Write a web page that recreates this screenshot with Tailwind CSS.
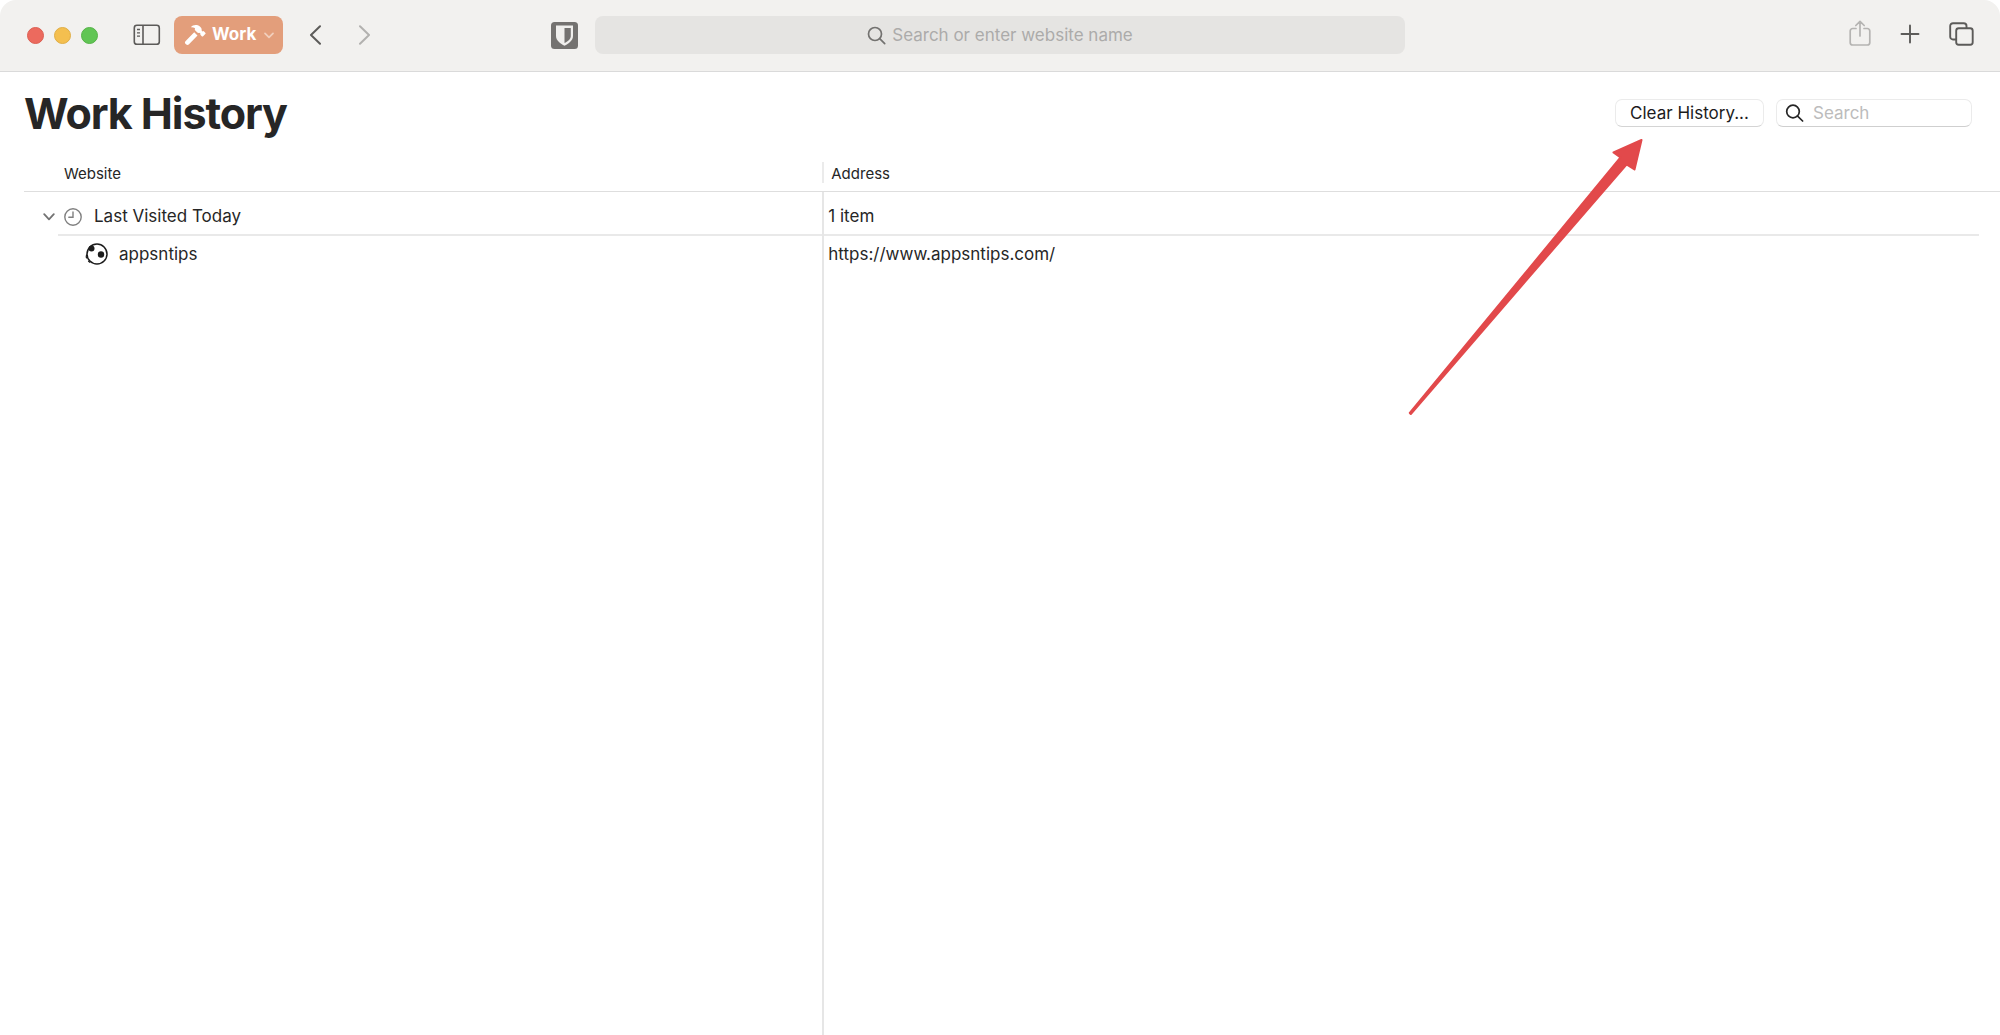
<!DOCTYPE html>
<html lang="en">
<head>
<meta charset="utf-8">
<meta name="viewport" content="width=device-width, initial-scale=1">
<title>Work History</title>
<script src="https://cdn.jsdelivr.net/npm/@tailwindcss/browser@4"></script>
</head>
<body class="relative flex min-h-screen flex-col bg-white font-['Inter',sans-serif] text-[#262626]">

<header class="grid h-[72px] grid-cols-[1fr_40.5%_1fr] items-start rounded-t-[16px] border-b border-[#dadada] bg-[#f2f1ef] pt-4">
  <div class="flex h-[38px] items-center pr-[17px] pl-[27px]">
    <div class="flex gap-[10px]">
      <button aria-label="Close" class="size-[17px] rounded-full border border-[#dc5f52] bg-[#ec6a5e]"></button>
      <button aria-label="Minimize" class="size-[17px] rounded-full border border-[#e0ae45] bg-[#f4bf4f]"></button>
      <button aria-label="Zoom" class="size-[17px] rounded-full border border-[#55b347] bg-[#61c554]"></button>
    </div>
    <button aria-label="Show sidebar" class="ml-[35px]">
      <svg class="block" width="28" height="22" viewBox="0 0 28 22" fill="none" stroke="#5c5b59" stroke-width="1.6"><rect x="1.3" y="1.3" width="25" height="19" rx="2.6"/><path d="M10 1.3v19"/><path d="M4 5.5h3M4 8.8h3M4 12.1h3" stroke-width="1.3"/></svg>
    </button>
    <button class="ml-[13px] flex h-[38px] w-[109px] items-center rounded-[8px] bg-[#e39e7b] pl-[10px] text-[17px] font-bold text-white">
      <svg class="mr-[6px] shrink-0" width="22" height="22" viewBox="0 0 22 22" fill="#fff"><path d="M6.800 3.200C9 .7 13 .3 15.900 2.600C17.400 3.800 17.800 5 17.700 6.700L18.700 7.600L19.600 7L21.500 8.900C21.700 9.200 21.700 9.500 21.500 9.800L18.900 12.400C18.600 12.600 18.300 12.600 18 12.400L16.300 10.700L16.500 9.700L15.500 8.800C14.700 9.100 14 9 13.300 8.500L11.300 6.600C10.600 5.800 10.700 4.900 11.100 4.300C9.900 3.400 8.400 3.200 6.800 3.200Z"/><path d="M10.200 8.300L13.500 11.500L5 20.300C4.100 21.200 2.900 21.200 2 20.300L1.500 19.800C.7 19 .7 17.800 1.700 16.900Z"/></svg>
      Work
      <svg class="ml-2 shrink-0" width="10" height="7" viewBox="0 0 10 7" fill="none" stroke="#f2cfbd" stroke-width="1.700" stroke-linecap="round" stroke-linejoin="round"><path d="M1 1.300l4 4 4-4"/></svg>
    </button>
    <button aria-label="Back" class="ml-[26px]">
      <svg class="block" width="13" height="20" viewBox="0 0 13 20" fill="none" stroke="#5c5b59" stroke-width="2" stroke-linecap="round" stroke-linejoin="round"><path d="M11 1.300L2 10l9 8.700"/></svg>
    </button>
    <button aria-label="Forward" class="ml-9">
      <svg class="block" width="13" height="20" viewBox="0 0 13 20" fill="none" stroke="#b2b1af" stroke-width="2" stroke-linecap="round" stroke-linejoin="round"><path d="M2 1.300L11 10l-9 8.700"/></svg>
    </button>
    <button aria-label="Password manager" class="ml-auto">
      <svg class="block" width="27" height="27" viewBox="0 0 27 27"><rect width="27" height="27" rx="3.500" fill="#747270"/><path d="M5 3.500h17v10.500c0 4.500-4.500 7.900-8.500 9.700C9.500 21.900 5 18.500 5 14z" fill="#f0efed"/><path d="M13.500 6h6.300v8c0 3.200-3.300 5.500-6.300 7.100z" fill="#747270"/></svg>
    </button>
  </div>

  <label class="flex h-[38px] items-center justify-center gap-[6px] rounded-[8px] bg-[#e5e4e2]">
    <svg width="19" height="19" viewBox="0 0 19 19" fill="none" stroke="#737270" stroke-width="1.700" stroke-linecap="round"><circle cx="8" cy="8" r="6.500"/><path d="M12.700 12.700l5 5"/></svg>
    <input type="text" aria-label="Address" placeholder="Search or enter website name" class="field-sizing-content pt-[2px] text-[17px] outline-none placeholder:text-[#acabaa]">
  </label>

  <div class="flex h-[38px] items-center justify-end pr-[26px]">
    <button aria-label="Share">
      <svg class="mb-1 block" width="22" height="26" viewBox="0 0 22 26" fill="none" stroke="#b5b4b2" stroke-width="1.700" stroke-linecap="round" stroke-linejoin="round"><path d="M7 8.500H3.700A2.500 2.500 0 0 0 1.200 11v11.500A2.500 2.500 0 0 0 3.700 25h14.600a2.500 2.500 0 0 0 2.500-2.500V11a2.500 2.500 0 0 0-2.500-2.500H15M11 16V1.500M6.800 5.500L11 1.300l4.200 4.200"/></svg>
    </button>
    <button aria-label="New tab" class="ml-[29px]">
      <svg class="mb-[2px] block" width="20" height="20" viewBox="0 0 20 20" fill="none" stroke="#5c5b59" stroke-width="1.900" stroke-linecap="round"><path d="M10 1.500v17M1.500 10h17"/></svg>
    </button>
    <button aria-label="Tab overview" class="ml-[29px]">
      <svg class="mb-[2px] block" width="25" height="24" viewBox="0 0 25 24" fill="none" stroke="#5c5b59" stroke-width="1.900" stroke-linejoin="round"><rect x="7.200" y="6.200" width="16.500" height="16.500" rx="2.500"/><path d="M7 17.500H4A2.800 2.800 0 0 1 1.200 14.700V4A2.800 2.800 0 0 1 4 1.200h10.700A2.800 2.800 0 0 1 17.500 4v2.200"/></svg>
    </button>
  </div>
</header>

<main class="flex flex-1 flex-col pl-6">
  <div class="flex h-[90px] items-center pr-7 pb-2">
    <h1 class="mr-auto text-[43px] leading-[52px] font-bold tracking-tight">Work History</h1>
    <button class="h-[28px] w-[149px] rounded-[7px] border border-[#ebebeb] border-b-[#d4d4d4] text-[17px] leading-[22px] text-[#1c1c1c]">Clear History...</button>
    <label class="ml-3 flex h-[28px] w-[196px] items-center gap-[9px] rounded-[7px] border border-[#ebebeb] border-b-[#cfcfcf] pl-2">
      <svg class="shrink-0" width="19" height="18" viewBox="0 0 19 18" fill="none" stroke="#262626" stroke-width="1.700" stroke-linecap="round"><circle cx="8" cy="7.500" r="6.300"/><path d="M12.600 12.100l5 4.900"/></svg>
      <input type="search" aria-label="Search history" placeholder="Search" class="w-full min-w-0 pt-[2px] text-[17px] outline-none placeholder:text-[#bcbcbc]">
    </label>
  </div>

  <table class="w-full flex-1 table-fixed border-separate border-spacing-0 text-left text-[17px]">
    <colgroup><col class="w-[40.5%]"><col></colgroup>
    <thead class="text-[15px]">
      <tr class="h-[30px]">
        <th class="border-b border-[#dedede] p-0 pb-[8px] font-normal"><div class="h-[21px] border-r-2 border-[#ebebeb] pl-10 leading-6">Website</div></th>
        <th class="border-b border-[#dedede] p-0 pb-[8px] pl-[7px] font-normal"><div class="h-[21px] leading-6">Address</div></th>
      </tr>
    </thead>
    <tbody>
      <tr class="h-[44px]">
        <td class="border-r-2 border-[#e6e6e6] p-0 pl-[34px]">
          <div class="relative flex h-[44px] items-center border-b-2 border-[#e9e9e9] pt-2 pl-[6px]">
            <button aria-label="Collapse group" class="absolute -left-[15px]">
              <svg class="block" width="12" height="8" viewBox="0 0 12 8" fill="none" stroke="#737373" stroke-width="1.800" stroke-linecap="round" stroke-linejoin="round"><path d="M1.200 1.200L6 6.300l4.800-5.100"/></svg>
            </button>
            <svg class="mr-3 shrink-0" width="18" height="18" viewBox="0 0 18 18" fill="none" stroke="#808080" stroke-width="1.400" stroke-linecap="round"><circle cx="9" cy="9" r="8.200"/><path d="M9 4v5.300H4.800"/></svg>
            <span>Last Visited Today</span>
          </div>
        </td>
        <td class="p-0 pr-[21px]"><div class="flex h-[44px] items-center border-b-2 border-[#e9e9e9] pt-2 pl-1">1 item</div></td>
      </tr>
      <tr class="h-[36px]">
        <td class="border-r-2 border-[#e6e6e6] p-0 pl-[61px]">
          <div class="flex items-center">
            <svg class="mr-[11px] shrink-0" width="23" height="22" viewBox="0 0 23 22"><circle cx="12" cy="11" r="10" fill="#fff" stroke="#1c1c1c" stroke-width="1.500"/><circle cx="6.500" cy="5.500" r="3" fill="#1c1c1c"/><circle cx="16" cy="11.500" r="3.200" fill="#1c1c1c"/><path d="M1.600 11.500l-.4 2.500 1 1.500M3.200 18l2 1.500" fill="none" stroke="#1c1c1c" stroke-width="1.200"/></svg>
            <span class="pt-[2px]">appsntips</span>
          </div>
        </td>
        <td class="p-0 pt-[2px] pl-1"><a href="https://www.appsntips.com/">https://www.appsntips.com/</a></td>
      </tr>
      <tr aria-hidden="true"><td class="border-r-2 border-[#e6e6e6] p-0"></td><td class="p-0"></td></tr>
    </tbody>
  </table>
</main>

<!-- Callout arrow pointing at the Clear History button -->
<svg class="pointer-events-none absolute top-[138px] right-[356px]" width="236" height="278" viewBox="0 0 236 278" fill="#e2494b" stroke="#e2494b" stroke-width="2" stroke-linejoin="round"><path d="M233.500 2L205.500 14.500L212.500 19.500L1.800 275L2.800 276L218.500 26.500L226.500 31.500Z"/></svg>
</body>
</html>
